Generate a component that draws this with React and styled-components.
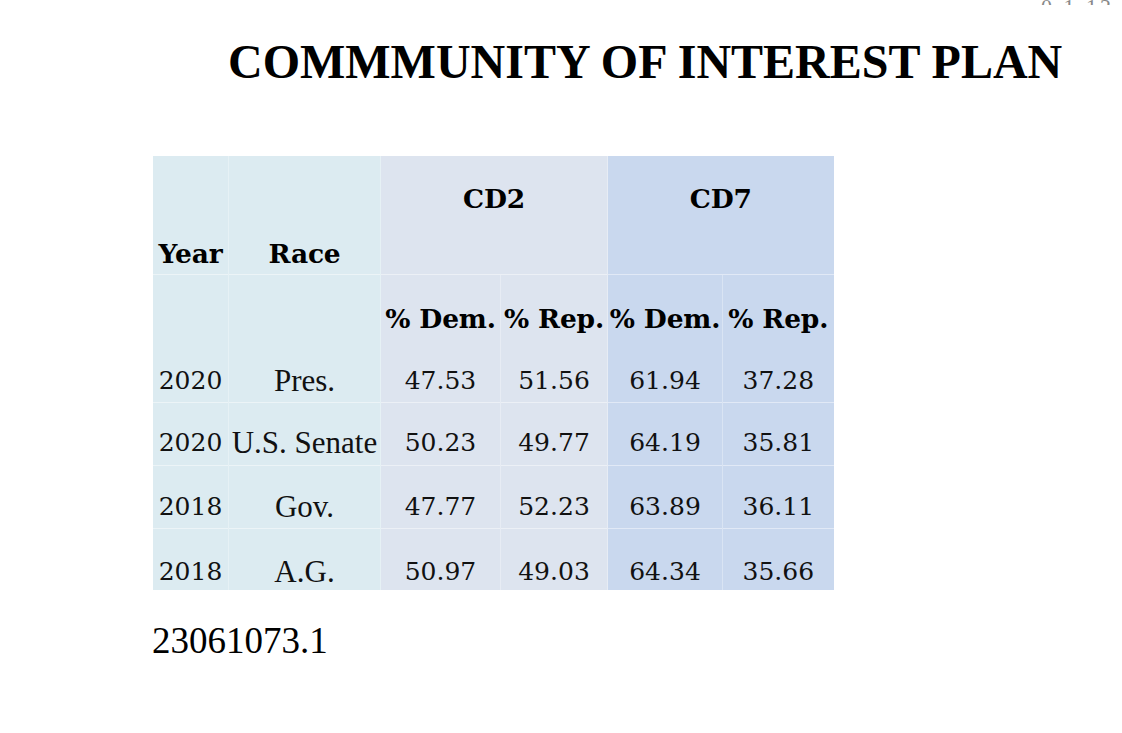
import styled, { createGlobalStyle } from "styled-components";

const GlobalStyle = createGlobalStyle`
  html, body {
    margin: 0;
    padding: 0;
    background: #ffffff;
  }
  body {
    font-family: "Liberation Serif", "Times New Roman", serif;
    color: #111;
  }
`;

const rows = [
  { year: "2020", race: "Pres.", cd2: ["47.53", "51.56"], cd7: ["61.94", "37.28"], h: 62, pb: 6, line: false },
  { year: "2020", race: "U.S. Senate", cd2: ["50.23", "49.77"], cd7: ["64.19", "35.81"], h: 63, pb: 7, line: true },
  { year: "2018", race: "Gov.", cd2: ["47.77", "52.23"], cd7: ["63.89", "36.11"], h: 63, pb: 6, line: true },
  { year: "2018", race: "A.G.", cd2: ["50.97", "49.03"], cd7: ["64.34", "35.66"], h: 62, pb: 3, line: true },
];

const shades = {
  side: "#dcebf1",
  cd2: "#dde4ef",
  cd7: "#c9d8ee",
};

function App() {
  return (
    <>
      <GlobalStyle />
      <Page>
        <TopMark>
          <span>0.1.12</span>
        </TopMark>
        <Title>COMMMUNITY OF INTEREST PLAN</Title>
        <DataTable>
          <colgroup>
            <col style={{ width: 76 }} />
            <col style={{ width: 152 }} />
            <col style={{ width: 120 }} />
            <col style={{ width: 107 }} />
            <col style={{ width: 115 }} />
            <col style={{ width: 111 }} />
          </colgroup>
          <tbody>
            <Row $h={118}>
              <HeadCell $tone="side" $pb={5}>Year</HeadCell>
              <HeadCell $tone="side" $pb={5}>Race</HeadCell>
              <GroupCell $tone="cd2" colSpan={2}>CD2</GroupCell>
              <GroupCell $tone="cd7" colSpan={2}>CD7</GroupCell>
            </Row>
            <Row $h={66} $line>
              <Cell $tone="side" />
              <Cell $tone="side" />
              <HeadCell $tone="cd2" $pb={6}>% Dem.</HeadCell>
              <HeadCell $tone="cd2" $pb={6}>% Rep.</HeadCell>
              <HeadCell $tone="cd7" $pb={6}>% Dem.</HeadCell>
              <HeadCell $tone="cd7" $pb={6}>% Rep.</HeadCell>
            </Row>
            {rows.map((r, i) => (
              <Row key={i} $h={r.h} $line={r.line}>
                <NumCell $tone="side" $pb={r.pb}>{r.year}</NumCell>
                <RaceCell $tone="side" $pb={r.pb}>{r.race}</RaceCell>
                <NumCell $tone="cd2" $pb={r.pb}>{r.cd2[0]}</NumCell>
                <NumCell $tone="cd2" $pb={r.pb}>{r.cd2[1]}</NumCell>
                <NumCell $tone="cd7" $pb={r.pb}>{r.cd7[0]}</NumCell>
                <NumCell $tone="cd7" $pb={r.pb}>{r.cd7[1]}</NumCell>
              </Row>
            ))}
          </tbody>
        </DataTable>
        <DocId>23061073.1</DocId>
      </Page>
    </>
  );
}

export default App;

const Page = styled.main`
  width: 1122px;
  height: 733px;
  box-sizing: border-box;
  padding-left: 152px;
  overflow: hidden;
`;

// bottom of a page number cut off at the top edge
const TopMark = styled.div`
  height: 5px;
  overflow: hidden;
  text-align: right;
  padding-right: 8px;
  span {
    display: inline-block;
    margin-top: -16px;
    font-size: 22px;
    line-height: 20px;
    color: #888;
    letter-spacing: 3px;
  }
`;

const Title = styled.h1`
  margin: 33px 0 0 76px;
  font-family: "Liberation Serif", "Times New Roman", serif;
  font-weight: 700;
  font-size: 48px;
  line-height: 48px;
  color: #000;
  white-space: nowrap;
`;

const DataTable = styled.table`
  margin-top: 70px;
  border-collapse: collapse;
  border-spacing: 0;
  table-layout: fixed;
  width: 681px;
`;

const Row = styled.tr`
  height: ${(p) => p.$h}px;
  td {
    border-top: ${(p) => (p.$line ? "1px solid rgba(255,255,255,0.45)" : "none")};
  }
`;

const Cell = styled.td`
  padding: 0 0 ${(p) => p.$pb || 0}px 0;
  background: ${(p) => shades[p.$tone]};
  border-left: 1px solid rgba(255, 255, 255, 0.3);
  text-align: center;
  vertical-align: bottom;
  white-space: nowrap;
  line-height: 30px;
  overflow: visible;
`;

const HeadCell = styled(Cell)`
  font-family: "DejaVu Serif", Georgia, serif;
  font-weight: 700;
  font-size: 26.5px;
  letter-spacing: -0.2px;
  color: #000;
`;

const GroupCell = styled(HeadCell)`
  vertical-align: top;
  padding-top: 28px;
`;

const NumCell = styled(Cell)`
  font-family: "DejaVu Serif", Georgia, serif;
  font-size: 25px;
  color: #111;
`;

const RaceCell = styled(Cell)`
  font-family: "Liberation Serif", "Times New Roman", serif;
  font-size: 31px;
  color: #111;
`;

const DocId = styled.div`
  margin-top: 30px;
  font-family: "Liberation Serif", "Times New Roman", serif;
  font-size: 37px;
  line-height: 42px;
  color: #000;
`;
